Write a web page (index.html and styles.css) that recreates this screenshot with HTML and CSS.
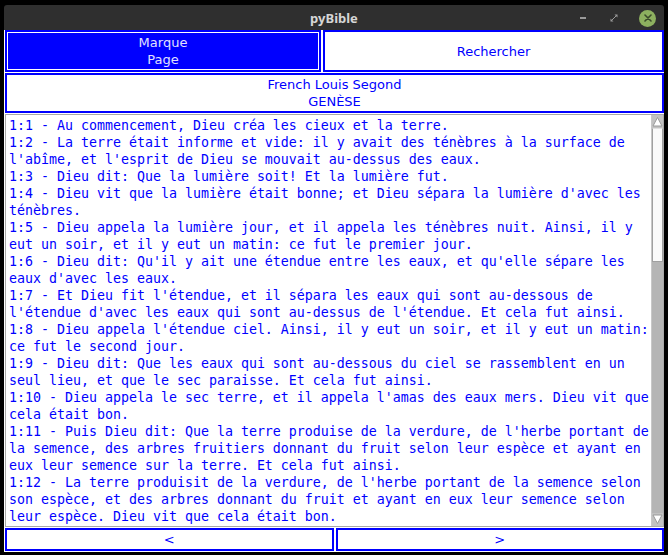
FILE: index.html
```html
<!DOCTYPE html>
<html lang="fr">
<head>
<meta charset="utf-8">
<title>pyBible</title>
<link rel="stylesheet" href="styles.css">
</head>
<body>
<div class="screen">
  <div class="window">
    <div class="titlebar">
      <div class="title">pyBible</div>
      <div class="controls">
        <span class="ctl ctl-min"></span>
        <svg class="ctl-max" width="8" height="8" viewBox="0 0 8 8"><path d="M4.5 0.5H7.5V3.5Z M3.5 7.5H0.5V4.5Z" fill="#9a9a9a"/><path d="M7 1L1 7" stroke="#9a9a9a" stroke-width="1"/></svg>
        <span class="ctl-close"><svg width="8" height="8" viewBox="0 0 8 8"><path d="M1 1L7 7M7 1L1 7" stroke="#3a4a2a" stroke-width="1.6" stroke-linecap="round"/></svg></span>
      </div>
    </div>
    <div class="app">
      <div class="toprow">
        <div class="btn btn-active">Marque<br>Page</div>
        <div class="btn">Rechercher</div>
      </div>
      <div class="header">French Louis Segond<br>GENÈSE</div>
      <div class="textframe">
        <div class="text">
          <div class="verse">1:1 - Au commencement, Dieu créa les cieux et la terre.</div>
          <div class="verse">1:2 - La terre était informe et vide: il y avait des ténèbres à la surface de l'abîme, et l'esprit de Dieu se mouvait au-dessus des eaux.</div>
          <div class="verse">1:3 - Dieu dit: Que la lumière soit! Et la lumière fut.</div>
          <div class="verse">1:4 - Dieu vit que la lumière était bonne; et Dieu sépara la lumière d'avec les ténèbres.</div>
          <div class="verse">1:5 - Dieu appela la lumière jour, et il appela les ténèbres nuit. Ainsi, il y eut un soir, et il y eut un matin: ce fut le premier jour.</div>
          <div class="verse">1:6 - Dieu dit: Qu'il y ait une étendue entre les eaux, et qu'elle sépare les eaux d'avec les eaux.</div>
          <div class="verse">1:7 - Et Dieu fit l'étendue, et il sépara les eaux qui sont au-dessous de l'étendue d'avec les eaux qui sont au-dessus de l'étendue. Et cela fut ainsi.</div>
          <div class="verse">1:8 - Dieu appela l'étendue ciel. Ainsi, il y eut un soir, et il y eut un matin: ce fut le second jour.</div>
          <div class="verse">1:9 - Dieu dit: Que les eaux qui sont au-dessous du ciel se rassemblent en un seul lieu, et que le sec paraisse. Et cela fut ainsi.</div>
          <div class="verse">1:10 - Dieu appela le sec terre, et il appela l'amas des eaux mers. Dieu vit que cela était bon.</div>
          <div class="verse">1:11 - Puis Dieu dit: Que la terre produise de la verdure, de l'herbe portant de la semence, des arbres fruitiers donnant du fruit selon leur espèce et ayant en eux leur semence sur la terre. Et cela fut ainsi.</div>
          <div class="verse">1:12 - La terre produisit de la verdure, de l'herbe portant de la semence selon son espèce, et des arbres donnant du fruit et ayant en eux leur semence selon leur espèce. Dieu vit que cela était bon.</div>
        </div>
        <div class="scrollbar">
          <div class="arrow arrow-up"><svg width="11" height="11" viewBox="0 0 11 11"><path d="M5.5 1.5L10 10H1Z" fill="#ffffff" stroke="#9a9a9a" stroke-width="1"/></svg></div>
          <div class="thumb"></div>
          <div class="trough"></div>
          <div class="arrow arrow-down"><svg width="11" height="11" viewBox="0 0 11 11"><path d="M5.5 9.5L10 1H1Z" fill="#ffffff" stroke="#9a9a9a" stroke-width="1"/></svg></div>
        </div>
      </div>
      <div class="bottomrow">
        <div class="btn btn-small">&lt;</div>
        <div class="btn btn-small">&gt;</div>
      </div>
    </div>
  </div>
</div>
</body>
</html>
```

FILE: styles.css
```css
html, body {
  margin: 0;
  padding: 0;
  background: #000000;
}

.screen {
  width: 668px;
  height: 555px;
  padding: 5px 4px 0 4px;
  box-sizing: border-box;
  background: #000000;
}

.window {
  width: 660px;
  display: flex;
  flex-direction: column;
}

.titlebar {
  height: 25px;
  background: #2f2f2f;
  border-radius: 3px 3px 0 0;
  display: flex;
  align-items: center;
  justify-content: center;
  position: relative;
}

.title {
  font-family: "Noto Sans", "DejaVu Sans", sans-serif;
  font-size: 13px;
  font-weight: bold;
  color: #d6d6d6;
  margin-top: 0px;
}

.controls {
  position: absolute;
  right: 8px;
  top: 4px;
  display: flex;
  align-items: center;
  gap: 0;
  height: 18px;
}

.ctl-min {
  display: block;
  width: 6px;
  height: 2px;
  background: #9a9a9a;
  margin-right: 24px;
}

.ctl-max {
  display: block;
  margin-right: 21px;
}

.ctl-close {
  width: 17px;
  height: 17px;
  border-radius: 50%;
  background: #8db05f;
  display: flex;
  align-items: center;
  justify-content: center;
}

.app {
  background: #ffffff;
  padding: 0 0 1px 1px;
  display: flex;
  flex-direction: column;
  gap: 1px;
  height: 522px;
  box-sizing: border-box;
}

.toprow {
  display: grid;
  grid-template-columns: 316px 1fr;
  gap: 2px;
  height: 42px;
}

.btn {
  border: 2px solid #0000ff;
  background: #ffffff;
  color: #0000ff;
  font-family: "DejaVu Sans", sans-serif;
  font-size: 13px;
  line-height: 17px;
  text-align: center;
  display: flex;
  align-items: center;
  justify-content: center;
  box-sizing: border-box;
}

.btn-active {
  background: #0000ff;
  color: #e0e0ff;
  box-shadow: inset 0 0 0 1px #ffffff;
}

.header {
  height: 40px;
  border: 2px solid #0000ff;
  box-sizing: border-box;
  color: #0000ff;
  font-family: "DejaVu Sans", sans-serif;
  font-size: 13px;
  line-height: 17px;
  text-align: center;
  display: flex;
  align-items: center;
  justify-content: center;
}

.textframe {
  height: 413px;
  border: 1px solid #a8a8a8;
  box-sizing: border-box;
  display: flex;
  background: #ffffff;
}

.text {
  width: 641px;
  padding: 2px 2px 0 3px;
  font-family: "DejaVu Sans Mono", monospace;
  font-size: 13.29px;
  line-height: 17px;
  color: #0000ff;
  overflow: hidden;
}

.verse {
  width: 641px;
}

.scrollbar {
  flex: 1;
  display: flex;
  flex-direction: column;
  background: #b5b5b5;
  border-left: 1px solid #c8c8c8;
}

.arrow {
  height: 13px;
  background: #c2c2c2;
  display: flex;
  align-items: center;
  justify-content: center;
}

.thumb {
  height: 134px;
  background: #fafafa;
  border: 1px solid #a0a0a0;
  border-top-color: #e0e0e0;
  box-sizing: border-box;
}

.trough {
  flex: 1;
  background: #b5b5b5;
}

.bottomrow {
  display: grid;
  grid-template-columns: 1fr 1fr;
  gap: 2px;
  height: 23px;
}

.btn-small {
  font-size: 13px;
}
```
